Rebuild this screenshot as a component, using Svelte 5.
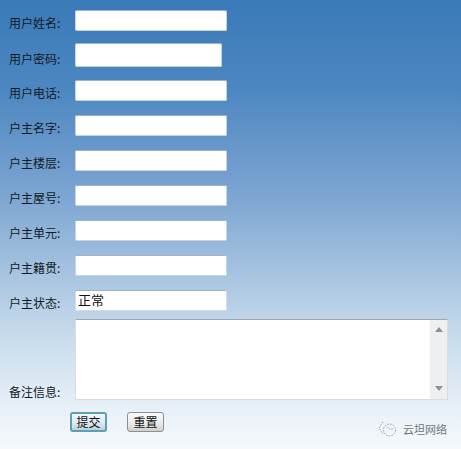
<script>
  const rows = [
    { label: '用户姓名:', cls: 'first' },
    { label: '用户密码:', cls: 'pw' },
    { label: '用户电话:' },
    { label: '户主名字:' },
    { label: '户主楼层:' },
    { label: '户主屋号:' },
    { label: '户主单元:' },
    { label: '户主籍贯:' },
    { label: '户主状态:', value: '正常', cls: 'state' }
  ];
</script>

<div class="page">
  <form class="form">
    {#each rows as r}
      <div class="row {r.cls ?? ''}">
        <span class="label">{r.label}</span>
        <div class="field {r.cls ?? ''}">{r.value ?? ''}</div>
      </div>
    {/each}
    <div class="row note">
      <span class="label">备注信息:</span>
      <div class="area">
        <div class="scroll">
          <svg width="8" height="5" viewBox="0 0 8 5"><path d="M4 0 8 5H0Z" fill="#8d9397"/></svg>
          <svg width="8" height="5" viewBox="0 0 8 5"><path d="M0 0H8L4 5Z" fill="#8d9397"/></svg>
        </div>
      </div>
    </div>
    <div class="buttons">
      <button type="button" class="btn active">提交</button>
      <button type="button" class="btn">重置</button>
    </div>
  </form>
  <div class="mark">
    <svg width="20" height="20" viewBox="0 0 20 20" fill="none" stroke="#8f9499" stroke-width="0.9" stroke-dasharray="1.6 1.2">
      <path d="M5 3 1 9l4 6"/>
      <circle cx="11.5" cy="11" r="6"/>
      <path d="M9 7.5l3 3 4-1"/>
    </svg>
    <span>云坦网络</span>
  </div>
</div>

<style>
  :global(body) { margin: 0; }
  .page {
    position: relative;
    width: 461px;
    height: 449px;
    overflow: hidden;
    background: linear-gradient(180deg, #3a7ab8 0%, #4d87c1 20%, #7ba4d1 43%, #a4c2df 60%, #c8dbec 75%, #e6eff7 90%, #f6f9fc 100%);
    font-family: "Noto Sans CJK SC", sans-serif;
    font-size: 12px;
    color: #111a24;
  }
  .form {
    display: flex;
    flex-direction: column;
    padding: 10px 0 0 9px;
  }
  .row {
    display: flex;
    align-items: center;
    height: 21px;
    margin-bottom: 14px;
  }
  .row.first { margin-bottom: 12px; }
  .row.pw { height: 24px; margin-bottom: 13px; }
  .label { width: 66px; flex: none; line-height: 21px; position: relative; top: 2px; }
  .row.pw .label { top: 3px; }
  .field {
    box-sizing: border-box;
    width: 152px;
    height: 21px;
    background: #fff;
    border: 1px solid #c3d6e8;
    border-top-color: #9db2c6;
    border-radius: 2px;
    padding-left: 2px;
    font-size: 13px;
    line-height: 17px;
    color: #111;
  }
  .field.pw { width: 147px; height: 24px; }
  .field.state { border-color: #d0deeb; border-top-color: #a5afb9; }
  .row.note {
    align-items: flex-end;
    height: 81px;
    margin: -6px 0 12px;
  }
  .area {
    box-sizing: border-box;
    display: flex;
    justify-content: flex-end;
    width: 373px;
    height: 81px;
    background: #fff;
    border: 1px solid #d4dee8;
    border-top-color: #9aa6b0;
  }
  .scroll {
    box-sizing: border-box;
    width: 17px;
    background: #eeeff0;
    display: flex;
    flex-direction: column;
    justify-content: space-between;
    align-items: center;
    padding: 7px 0 8px;
  }
  .buttons { display: flex; gap: 20px; margin-left: 61px; }
  .btn {
    box-sizing: border-box;
    width: 37px;
    height: 20px;
    padding: 0;
    font: inherit;
    font-size: 12px;
    line-height: 16px;
    color: #111;
    border: 1px solid #8a8f92;
    border-radius: 3px;
    background: linear-gradient(180deg, #fbfbfb 0%, #ececec 55%, #cfcfcf 100%);
  }
  .btn.active {
    border: 2px solid #5f9fb4;
    background: linear-gradient(180deg, #f3f8fb 0%, #dfe9ef 55%, #bfd0da 100%);
  }
  .mark {
    position: absolute;
    left: 378px;
    top: 419px;
    display: flex;
    align-items: center;
    gap: 5px;
    font-size: 11px;
    color: #6f7780;
  }
</style>
